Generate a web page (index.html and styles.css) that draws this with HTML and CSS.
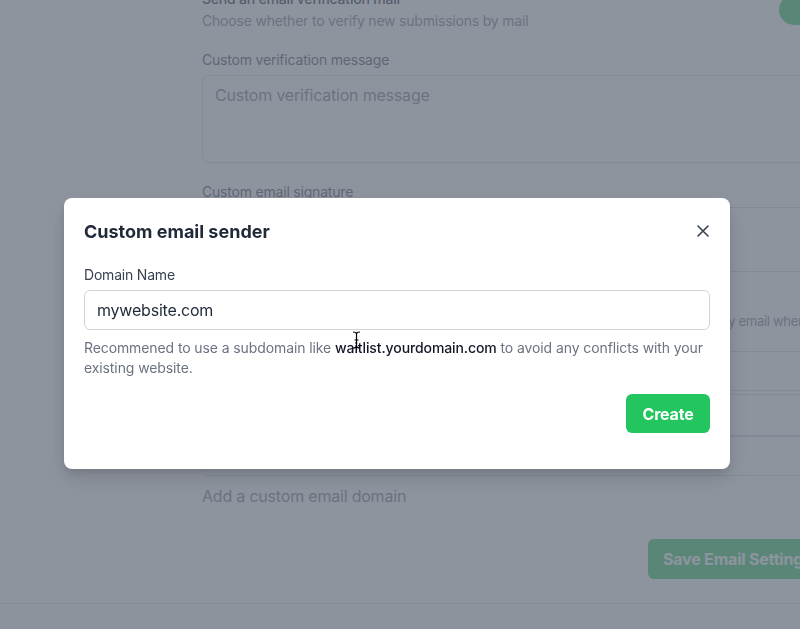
FILE: index.html
```html
<!DOCTYPE html>
<html>
<head>
<meta charset="utf-8">
<link rel="stylesheet" href="styles.css">
</head>
<body>
<div class="page">
  <div class="form">
    <div class="row-toggle">
      <div>
        <div class="label strong">Send an email verification mail</div>
        <div class="desc">Choose whether to verify new submissions by mail</div>
      </div>
      <div class="toggle"><span class="knob"></span></div>
    </div>

    <div class="field">
      <div class="label">Custom verification message</div>
      <div class="textarea">Custom verification message</div>
    </div>

    <div class="field">
      <div class="label">Custom email signature</div>
      <div class="textarea short"></div>
    </div>

    <div class="row-note">
      <div class="desc note">Send a notification to me by email when someone signs up</div>
    </div>

    <div class="stack">
      <div class="box b1"></div>
      <div class="box b2"></div>
      <div class="box b3"></div>
    </div>
    <div class="desc add">Add a custom email domain</div>

    <div class="actions">
      <div class="save">Save Email Settings</div>
    </div>
  </div>
  <div class="footer"></div>
</div>

<div class="overlay">
  <div class="modal">
    <div class="modal-head">
      <h2 class="modal-title">Custom email sender</h2>
      <svg class="close" width="12" height="12" viewBox="0 0 12 12"><path d="M1 1 L11 11 M11 1 L1 11" stroke="#374151" stroke-width="1.6" stroke-linecap="round" fill="none"/></svg>
    </div>
    <label class="m-label">Domain Name</label>
    <div class="m-input">mywebsite.com</div>
    <p class="m-help">Recommened to use a subdomain like <span class="em">waitlist.yourdomain.com</span> to avoid any conflicts with your existing website.</p>
    <div class="m-actions">
      <button class="create">Create</button>
    </div>
  </div>
</div>
<svg class="cursor" width="9" height="18" viewBox="0 0 9 18"><path d="M1 1 Q4.5 1 4.5 3 Q4.5 1 8 1 M4.5 3 V15 M1 17 Q4.5 17 4.5 15 Q4.5 17 8 17 M2.5 9 H6.5" stroke="#000" stroke-width="1.2" fill="none"/></svg>
</body>
</html>
```

FILE: styles.css
```css
* { box-sizing: border-box; }
html, body { margin: 0; padding: 0; }
body {
  width: 800px;
  height: 629px;
  overflow: hidden;
  background: #ffffff;
  font-family: Inter, "Liberation Sans", sans-serif;
  color: #374151;
}
.page {
  margin-top: -11px;
}
.form {
  margin-left: 202px;
  width: 700px;
}
.row-toggle {
  display: flex;
  justify-content: space-between;
  align-items: flex-start;
}
.toggle {
  width: 48px;
  height: 30px;
  border-radius: 15px;
  background: #22c55e;
  margin-top: 6px;
  margin-right: 75px;
}
.label {
  font-size: 14px;
  line-height: 20px;
  color: #374151;
  letter-spacing: -0.2px;
}
.label.strong { font-weight: 500; color: #111827; }
.desc {
  font-size: 14px;
  line-height: 20px;
  color: #6b7280;
  margin-top: 2px;
  letter-spacing: -0.2px;
}
.field { margin-top: 19px; }
.field .label { margin-bottom: 5px; }
.textarea {
  height: 88px;
  border: 1px solid #d1d5db;
  border-radius: 6px;
  padding: 8px 12px;
  font-size: 16px;
  line-height: 22px;
  color: #6b7280;
  letter-spacing: -0.2px;
}
.textarea.short { height: 65px; }
.row-note {
  margin-top: 39px;
  padding-left: 370px;
}
.note { white-space: nowrap; font-size: 13px; letter-spacing: -0.3px; }
.stack {
  margin-top: 20px;
  display: flex;
  flex-direction: column;
}
.box {
  border: 1px solid #d1d5db;
  border-radius: 6px;
}
.b1 { height: 40px; }
.b2 { height: 42px; margin-top: 3px; }
.b3 { height: 40px; margin-top: 0; }
.add { margin-top: 9px; font-size: 16px; line-height: 22px; }
.actions {
  margin-top: 32px;
  padding-left: 446px;
}
.save {
  width: 200px;
  height: 40px;
  border-radius: 6px;
  background: #22c55e;
  color: #fff;
  font-weight: 700;
  font-size: 16px;
  line-height: 40px;
  padding-left: 15px;
  letter-spacing: -0.2px;
}
.footer {
  margin-top: 24px;
  border-top: 1px solid #d1d5db;
  height: 40px;
  background: #f9fafb;
}

.overlay {
  position: fixed;
  inset: 0;
  background: rgba(107, 114, 128, 0.76);
}
.modal {
  margin: 198px 0 0 64px;
  width: 666px;
  background: #fff;
  border-radius: 8px;
  padding: 19px 20px 36px 20px;
  box-shadow: 0 10px 20px rgba(0,0,0,0.12), 0 4px 6px rgba(0,0,0,0.08);
}
.modal-head {
  display: flex;
  justify-content: space-between;
  align-items: center;
  height: 28px;
  margin-right: -1px;
}
.modal-title {
  margin: 0;
  font-size: 18px;
  font-weight: 700;
  color: #1f2937;
  letter-spacing: 0;
}
.close { margin-right: 2px; }
.m-label {
  display: block;
  margin-top: 20px;
  font-size: 14px;
  line-height: 20px;
  color: #374151;
  letter-spacing: -0.2px;
}
.m-input {
  margin-top: 5px;
  height: 40px;
  border: 1px solid #d1d5db;
  border-radius: 6px;
  padding: 0 12px;
  font-size: 16px;
  line-height: 38px;
  color: #1f2937;
  letter-spacing: -0.2px;
}
.m-help {
  margin: 8px 0 0 0;
  font-size: 14px;
  line-height: 20px;
  color: #6b7280;
  letter-spacing: -0.1px;
}
.m-help .em { color: #111827; font-weight: 500; }
.m-actions {
  display: flex;
  justify-content: flex-end;
  margin-top: 16px;
}
.create {
  width: 84px;
  height: 39px;
  border: none;
  border-radius: 6px;
  background: #22c55e;
  color: #fff;
  font-family: inherit;
  font-size: 16px;
  font-weight: 700;
  letter-spacing: -0.2px;
  padding: 0;
}
.cursor {
  position: fixed;
  left: 352px;
  top: 331px;
}
```
